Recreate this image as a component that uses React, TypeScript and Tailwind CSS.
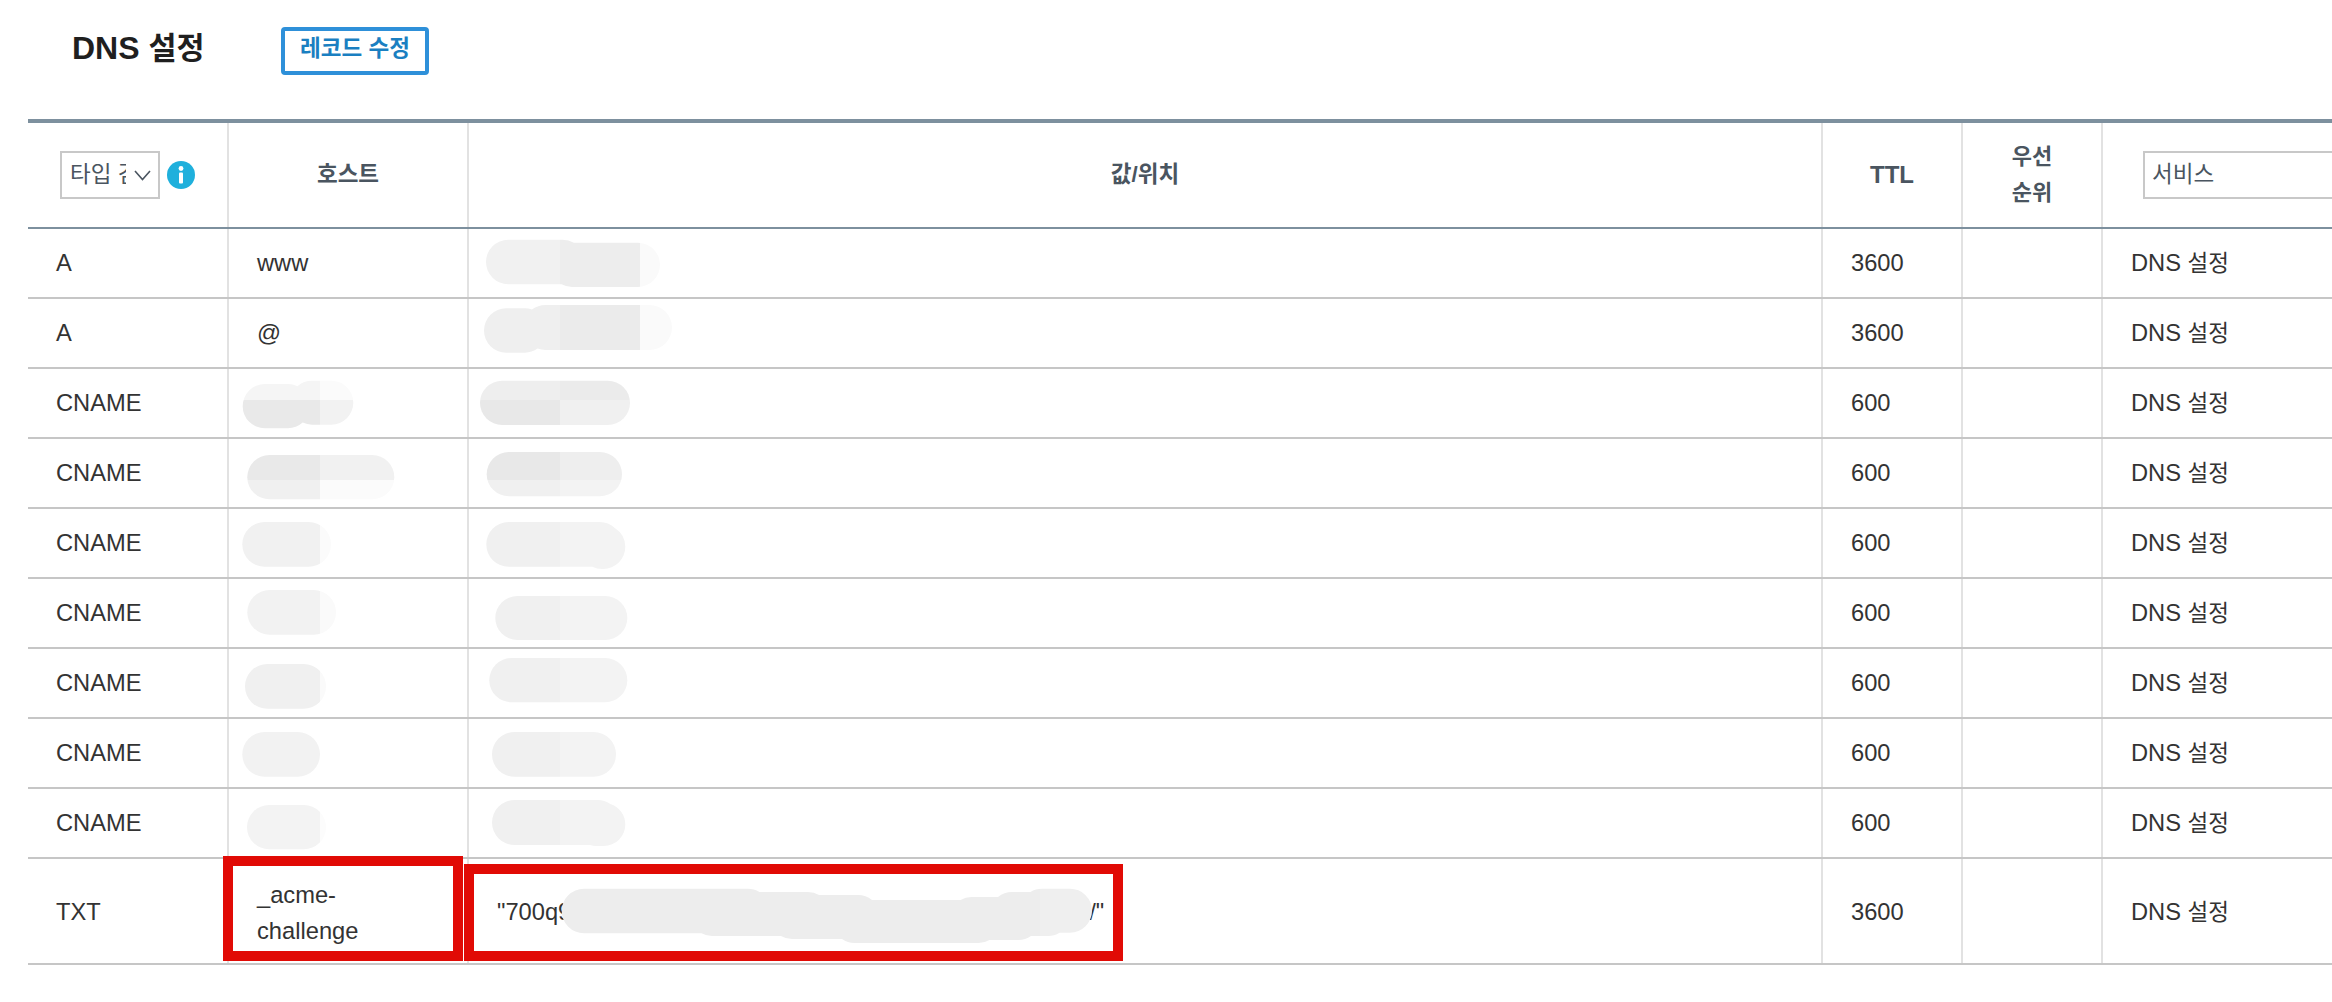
import React from "react";

type Blob = { pills: number[][]; xs: number[]; ys?: number[]; colors: string[][] };

const blobs: Blob[] = [
  { pills: [[486, 585, 239.7, 284.3], [550, 660, 242.7, 287]], xs: [560, 640], colors: [["#f1f1f1", "#ededed", "#fafafa"]] },
  { pills: [[484, 547, 308.3, 352.7], [523, 672, 305, 350]], xs: [560, 640], colors: [["#efefef", "#ebebeb", "#fafafa"]] },
  { pills: [[242.7, 310, 384, 428.3], [290, 353.3, 380.7, 424.7]], xs: [320], ys: [400], colors: [["#f5f5f5", "#fbfbfb"], ["#e9e9e9", "#f2f2f2"]] },
  { pills: [[480, 630, 380.7, 425]], xs: [560], ys: [400], colors: [["#eeeeee", "#ebebeb"], ["#e8e8e8", "#f0f0f0"]] },
  { pills: [[247.3, 394.3, 455, 499.3]], xs: [320], ys: [480], colors: [["#e9e9e9", "#f1f1f1"], ["#f0f0f0", "#fbfbfb"]] },
  { pills: [[486.7, 622, 452, 496.3]], xs: [560], ys: [480], colors: [["#e8e8e8", "#eeeeee"], ["#f0f0f0", "#f3f3f3"]] },
  { pills: [[242.3, 331, 522, 566.7]], xs: [320], colors: [["#f1f1f1", "#fbfbfb"]] },
  { pills: [[486.3, 622, 522, 566.7], [580, 625.3, 524.7, 569]], xs: [560], colors: [["#f0f0f0", "#f3f3f3"]] },
  { pills: [[247.3, 336, 590, 634.7]], xs: [320], colors: [["#f2f2f2", "#fafafa"]] },
  { pills: [[495.3, 627.3, 596, 640]], xs: [560], colors: [["#f0f0f0", "#f3f3f3"]] },
  { pills: [[245, 326, 664, 708.7]], xs: [320], colors: [["#f0f0f0", "#fafafa"]] },
  { pills: [[489.3, 627.3, 658, 702.3]], xs: [560], colors: [["#f0f0f0", "#f3f3f3"]] },
  { pills: [[242.3, 320, 732, 776.7]], xs: [], colors: [["#f2f2f2"]] },
  { pills: [[492, 616, 732, 776.7]], xs: [560], colors: [["#f0f0f0", "#f3f3f3"]] },
  { pills: [[247, 326, 805, 849.3]], xs: [320], colors: [["#f3f3f3", "#fcfcfc"]] },
  { pills: [[492, 620, 800, 845], [575, 625.3, 803, 846]], xs: [560], colors: [["#f0f0f0", "#f3f3f3"]] },
  {
    pills: [
      [561.7, 770, 888.7, 933.3],
      [690, 830, 892, 936],
      [770, 880, 895, 939],
      [833, 1000, 900, 943],
      [950, 1040, 897, 940],
      [990, 1070, 892, 936],
      [1020, 1092, 888.7, 932.7],
    ],
    xs: [1040],
    colors: [["#ededed", "#efefef"]],
  },
];

function Smudge({ blob, id }: { blob: Blob; id: string }) {
  const xb = [0, ...blob.xs, 2332];
  const yb = [0, ...(blob.ys ?? []), 1002];
  return (
    <g>
      <clipPath id={id}>
        {blob.pills.map(([x0, x1, y0, y1], i) => (
          <rect key={i} x={x0} y={y0} width={x1 - x0} height={y1 - y0} rx={(y1 - y0) / 2} />
        ))}
      </clipPath>
      <g clipPath={`url(#${id})`}>
        {blob.colors.map((row, r) =>
          row.map((c, k) => (
            <rect key={`${r}-${k}`} x={xb[k]} y={yb[r]} width={xb[k + 1] - xb[k]} height={yb[r + 1] - yb[r]} fill={c} />
          ))
        )}
      </g>
    </g>
  );
}

const K = ({ children }: { children: React.ReactNode }) => <span className="text-[22.5px]">{children}</span>;

const rows = [
  { type: "A", host: "www", ttl: "3600" },
  { type: "A", host: "@", ttl: "3600" },
  { type: "CNAME", host: "", ttl: "600" },
  { type: "CNAME", host: "", ttl: "600" },
  { type: "CNAME", host: "", ttl: "600" },
  { type: "CNAME", host: "", ttl: "600" },
  { type: "CNAME", host: "", ttl: "600" },
  { type: "CNAME", host: "", ttl: "600" },
  { type: "CNAME", host: "", ttl: "600" },
];

const cols = "grid grid-cols-[201px_240px_1354px_140px_140px_1fr]";
const cell = "flex items-center border-r-2 border-[#e2e2e2] px-[28px] pt-[2px]";
const tall = "flex items-center border-r-2 border-[#e2e2e2] px-[28px] pt-[4px]";
const head = "flex items-center justify-center border-r-2 border-[#e2e2e2] text-center font-bold text-[#4a5560]";

function Service({ offset }: { offset: string }) {
  return (
    <div className={`flex items-center pl-[28px] ${offset}`}>
      <span>
        DNS <K>설정</K>
      </span>
    </div>
  );
}

export default function App() {
  return (
    <div className="relative h-[1002px] w-[2332px] overflow-hidden bg-white text-[23.7px] text-[#333333] [font-family:'Liberation_Sans','Noto_Sans_CJK_KR',sans-serif]">
      <div className="flex h-[119px] items-start pl-[72px] pt-[27px]">
        <h1 className="w-[209px] text-[32px] font-bold leading-[42px] text-[#1f1f1f]">
          DNS <span className="text-[30.5px]">설정</span>
        </h1>
        <button className="flex h-[48px] w-[148px] items-center justify-center rounded-[4px] border-4 border-[#2e90d9] pb-[4px] text-[22.5px] font-bold text-[#1a7fc1]">
          레코드 수정
        </button>
      </div>

      <div className="ml-[28px] w-[2304px]">
        <div className={`${cols} h-[110px] border-b-2 border-t-4 border-[#7d909e]`}>
          <div className="flex items-center gap-[7px] border-r-2 border-[#e2e2e2] pl-[32px]">
            <div className="flex h-[48px] w-[100px] items-center border-2 border-[#c8c8c8] pl-[8px] text-[22.5px] font-normal text-[#4a5560]">
              <span className="w-[56px] shrink-0 overflow-hidden whitespace-nowrap">타입 검색</span>
              <svg width="17" height="11" viewBox="0 0 17 11" className="ml-[8px] shrink-0">
                <polyline points="1,1 8.5,9.5 16,1" fill="none" stroke="#4a5560" strokeWidth="1.6" />
              </svg>
            </div>
            <svg width="28" height="28" viewBox="0 0 28 28" className="shrink-0">
              <circle cx="14" cy="14" r="14" fill="#1fb0dc" />
              <circle cx="14" cy="7.5" r="2.4" fill="#ffffff" />
              <rect x="12" y="11.5" width="4" height="11" rx="1" fill="#ffffff" />
            </svg>
          </div>
          <div className={`${head} text-[22.5px]`}>호스트</div>
          <div className={`${head} text-[22.5px]`}>값/위치</div>
          <div className={`${head} text-[24px]`}>TTL</div>
          <div className={`${head} text-[22px] leading-[36px]`}>
            우선
            <br />
            순위
          </div>
          <div className="flex items-center pl-[40px]">
            <div className="flex h-[48px] w-[300px] shrink-0 items-center border-2 border-[#c8c8c8] pl-[7px] text-[22.5px] text-[#4a5560]">
              서비스
            </div>
          </div>
        </div>

        {rows.map((r, i) => (
          <div key={i} className={`${cols} h-[70px] border-b-2 border-[#c6c6c6]`}>
            <div className={cell}>{r.type}</div>
            <div className={cell}>{r.host}</div>
            <div className={cell} />
            <div className={cell}>{r.ttl}</div>
            <div className={cell} />
            <Service offset="pt-[2px]" />
          </div>
        ))}

        <div className={`${cols} h-[106px] border-b-2 border-[#c6c6c6]`}>
          <div className={tall}>TXT</div>
          <div className={`${tall} leading-[36px]`}>
            <span className="w-[130px]">_acme-challenge</span>
          </div>
          <div className={`${tall} whitespace-nowrap`}>
            "700q9<span className="inline-block w-[518px]" />/"
          </div>
          <div className={tall}>3600</div>
          <div className={tall} />
          <Service offset="pt-[4px]" />
        </div>
      </div>

      <svg width="2332" height="1002" viewBox="0 0 2332 1002" className="pointer-events-none absolute left-0 top-0">
        {blobs.map((b, i) => (
          <Smudge key={i} blob={b} id={`smudge-${i}`} />
        ))}
      </svg>

      <div className="absolute left-[223px] top-[856px] h-[105px] w-[240px] border-[10px] border-[#e10a05]" />
      <div className="absolute left-[464px] top-[864px] h-[97px] w-[659px] border-[10px] border-[#e10a05]" />
    </div>
  );
}
